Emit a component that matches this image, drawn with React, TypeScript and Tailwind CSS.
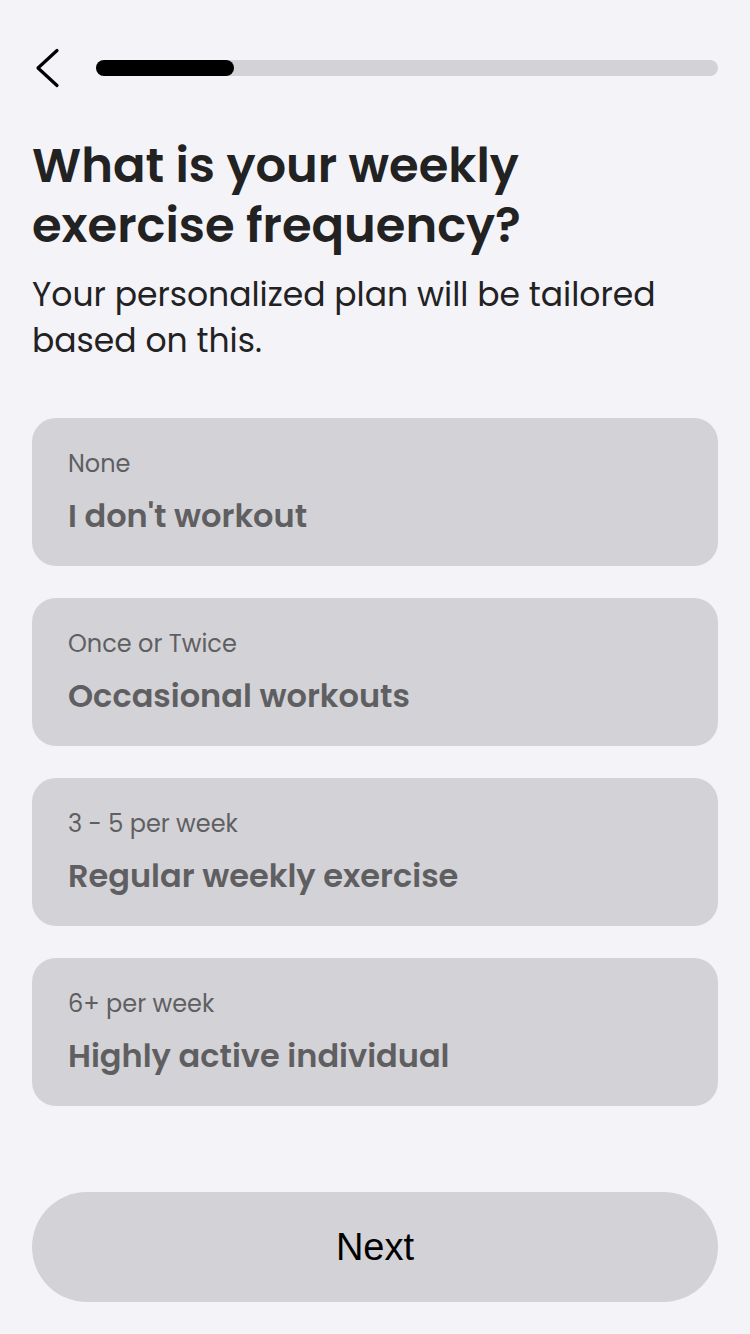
import { useState } from "react";

const OPTIONS = [
  { label: "None", title: "I don't workout" },
  { label: "Once or Twice", title: "Occasional workouts" },
  { label: "3 - 5 per week", title: "Regular weekly exercise" },
  { label: "6+ per week", title: "Highly active individual" },
];

const FONT = "font-['Poppins','Inter','Noto_Sans',sans-serif]";

// 每週運動頻率的問卷頁，選項預設都是未選取的灰色卡片
export default function App() {
  const [selected, setSelected] = useState<number | null>(null);

  return (
    <div className={`flex h-[1334px] flex-col bg-[#f4f3f8] px-8 ${FONT}`}>
      <div className="flex h-[136px] items-center gap-9">
        <button type="button" className="flex h-10 w-7 items-center justify-start">
          <svg width="28" height="40" viewBox="0 0 28 40" fill="none">
            <path d="M25 2.5 L6 20 L25 37.5" stroke="#000" strokeWidth="3.2" strokeLinecap="round" strokeLinejoin="round" />
          </svg>
        </button>
        <div className="h-4 flex-1 rounded-full bg-[#d3d2d7]">
          <div className="h-4 w-[138px] rounded-full bg-black" />
        </div>
      </div>

      <h1 className="text-[48px] leading-[60px] font-semibold text-[#222222]">
        What is your weekly
        <br />
        exercise frequency?
      </h1>
      <p className="mt-4 text-[33px] leading-[46px] text-[#222222]">
        Your personalized plan will be tailored based on this.
      </p>

      <div className="mt-[54px] flex flex-col gap-8">
        {OPTIONS.map((o, i) => (
          <button
            key={o.label}
            type="button"
            onClick={() => setSelected(i)}
            className={`flex h-[148px] flex-col items-start rounded-[24px] px-9 pt-[31px] text-left ${
              selected === i ? "bg-[#c4c3c9]" : "bg-[#d3d2d7]"
            }`}
          >
            <span className="text-[24px] leading-[30px] text-[#5f5f62]">{o.label}</span>
            <span className="mt-[19px] text-[32px] leading-[36px] font-semibold text-[#5f5f62]">{o.title}</span>
          </button>
        ))}
      </div>

      <div className="mt-auto pb-8">
        <button
          type="button"
          className="flex h-[110px] w-full items-center justify-center rounded-full bg-[#d3d2d7] font-['Liberation_Sans',Arial,sans-serif] text-[38px] text-black"
        >
          Next
        </button>
      </div>
    </div>
  );
}
